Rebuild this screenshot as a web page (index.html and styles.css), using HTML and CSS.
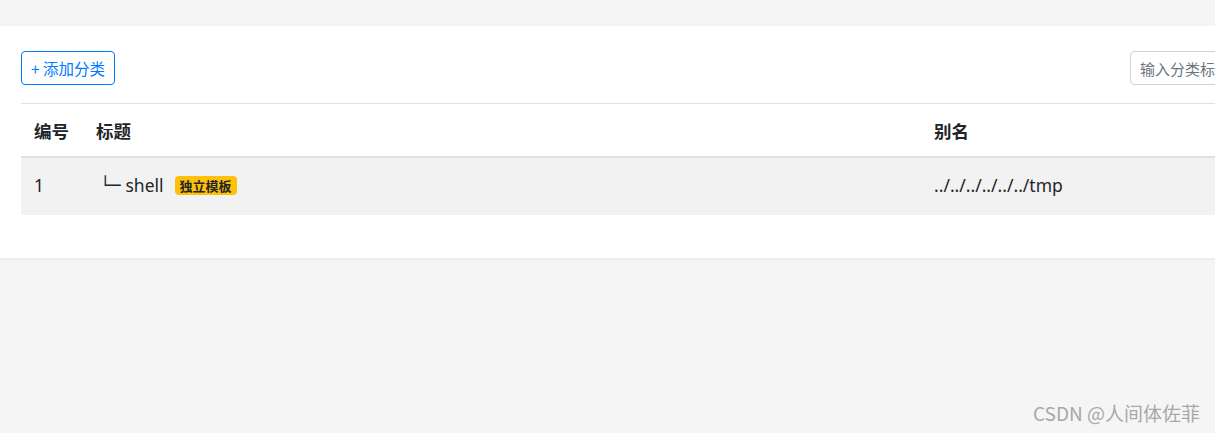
FILE: index.html
```html
<!DOCTYPE html>
<html lang="zh">
<head>
<meta charset="utf-8">
<link rel="stylesheet" href="styles.css">
</head>
<body>
<div class="page">
  <div class="card">
    <div class="toolbar">
      <button class="btn-add">+ 添加分类</button>
      <input class="search" type="text" placeholder="输入分类标题搜索">
    </div>
    <div class="table">
      <div class="row head">
        <div class="cell c-id">编号</div>
        <div class="cell c-title">标题</div>
        <div class="cell c-alias">别名</div>
      </div>
      <div class="row body">
        <div class="cell c-id">1</div>
        <div class="cell c-title"><span class="tree">└─</span><span class="name">shell</span><span class="badge">独立模板</span></div>
        <div class="cell c-alias">../../../../../../tmp</div>
      </div>
    </div>
  </div>
</div>
<div class="watermark">CSDN @人间体佐菲</div>
</body>
</html>
```

FILE: styles.css
```css
html, body {
  margin: 0;
  padding: 0;
  overflow: hidden;
}
body {
  background: #f5f5f5;
  font-family: "Noto Sans", "Noto Sans CJK SC", sans-serif;
  color: #212529;
  width: 1215px;
  height: 433px;
  position: relative;
}
.page {
  padding-top: 26px;
  width: 1351px;
}
.card {
  background: #fff;
  padding: 25px 21px 43px 21px;
  box-shadow: 0 1px 3px rgba(0,0,0,0.06);
}
.toolbar {
  display: flex;
  justify-content: space-between;
  align-items: center;
  height: 34px;
  margin-bottom: 18px;
}
.btn-add {
  height: 34px;
  box-sizing: border-box;
  border: 1px solid #007bff;
  border-radius: 4px;
  background: #fff;
  color: #007bff;
  font-family: "Noto Sans CJK SC", sans-serif;
  font-size: 15.5px;
  padding: 0;
  width: 94px;
  line-height: 32px;
}
.search {
  height: 34px;
  box-sizing: border-box;
  width: 200px;
  border: 1px solid #ced4da;
  border-radius: 4px;
  padding: 0 9px;
  font-family: "Noto Sans CJK SC", sans-serif;
  font-size: 15px;
  color: #6c757d;
}
.search::placeholder {
  color: #6c757d;
}
.table {
  border-top: 1px solid #dee2e6;
}
.row {
  display: grid;
  grid-template-columns: 63px 837px 1fr;
  align-items: center;
}
.row.head {
  height: 52px;
  border-bottom: 2px solid #dee2e6;
  font-weight: bold;
  font-size: 17.5px;
  font-family: "Noto Sans CJK SC", sans-serif;
}
.row.body {
  height: 57px;
  background: #f2f2f2;
  font-size: 17.5px;
}
.cell {
  padding-left: 13px;
  white-space: nowrap;
}
.row.body .cell {
  padding-bottom: 3px;
}
.c-title {
  padding-left: 12px;
  display: flex;
  align-items: center;
}
.tree {
  font-family: "DejaVu Sans", sans-serif;
  font-size: 17px;
  margin-left: 4px;
}
.name {
  margin-left: 5px;
}
.badge {
  margin-left: 11px;
  background: #ffc107;
  color: #212529;
  font-family: "Noto Sans CJK SC", sans-serif;
  font-size: 13px;
  font-weight: bold;
  line-height: 19px;
  padding: 0 5px;
  border-radius: 4px;
}
.watermark {
  position: absolute;
  right: 15px;
  top: 399px;
  font-family: "Noto Sans CJK SC", sans-serif;
  font-size: 19px;
  color: #a8a8a8;
}
```
